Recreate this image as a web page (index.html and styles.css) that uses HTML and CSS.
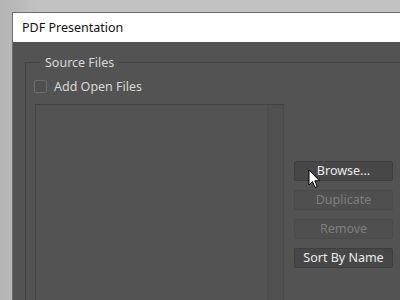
FILE: index.html
```html
<!DOCTYPE html>
<html lang="en">
<head>
    <meta charset="UTF-8">
    <title>PDF Presentation</title>
    <link rel="stylesheet" href="styles.css">
</head>
<body>
    <div class="dialog">
        <div class="title-bar">PDF Presentation</div>
        <div class="dialog-body">
            <fieldset class="group">
                <legend>Source Files</legend>
                <label class="check-row">
                    <span class="checkbox"></span>
                    Add Open Files
                </label>
                <div class="files-row">
                    <div class="file-list">
                        <div class="list-area"></div>
                        <div class="scrollbar"></div>
                    </div>
                    <div class="buttons">
                        <button class="btn">Browse...</button>
                        <button class="btn" disabled>Duplicate</button>
                        <button class="btn" disabled>Remove</button>
                        <button class="btn">Sort By Name</button>
                    </div>
                </div>
            </fieldset>
        </div>
    </div>

    <svg class="cursor" width="13" height="20" viewBox="0 0 13 20">
        <path d="M1 1 L1 16 L4.5 12.5 L7 18.5 L9.2 17.6 L6.8 11.8 L11.5 11.8 Z" fill="#fff" stroke="#000" stroke-width="1" stroke-linejoin="round"/>
    </svg>
</body>
</html>
```

FILE: styles.css
```css
html, body {
    margin: 0;
    height: 100%;
    overflow: hidden;
}

body {
    position: relative;
    background: linear-gradient(to right, #b4b4b4, #c2c2c2 40px, #c2c2c2);
    padding: 12px 0 0 12px;
    box-sizing: border-box;
    font-family: "Noto Sans", Arial, sans-serif;
    font-size: 12px;
}

.dialog {
    height: 100%;
    box-sizing: border-box;
    border: 1px solid #6b6b6b;
    border-right: none;
    border-bottom: none;
    background-color: #535353;
    display: flex;
    flex-direction: column;
}

.title-bar {
    height: 29px;
    line-height: 29px;
    background-color: #fff;
    color: #111;
    padding-left: 9px;
    font-size: 12.5px;
}

.dialog-body {
    flex: 1;
    padding: 12px 0 0 12px;
    min-height: 0;
}

.group {
    margin: 0;
    padding: 5px 0 0 8px;
    border: 1px solid #434343;
    border-right: none;
    border-bottom: none;
    min-width: 0;
    height: 100%;
    box-sizing: border-box;
}

.group legend {
    margin-left: 6px;
    padding: 0 5px;
    color: #d8d8d8;
    font-size: 12.5px;
}

.check-row {
    display: flex;
    align-items: center;
    gap: 7px;
    color: #d8d8d8;
    font-size: 12.5px;
    height: 20px;
}

.checkbox {
    width: 11px;
    height: 11px;
    border: 1px solid #6c6c6c;
    border-radius: 2px;
    background-color: #4f4f4f;
}

.files-row {
    display: flex;
    gap: 10px;
    margin-top: 8px;
    margin-left: 1px;
}

.file-list {
    display: flex;
    width: 247px;
    height: 200px;
    border-top: 1px solid #434343;
    border-left: 1px solid #434343;
    border-right: 1px solid #4a4a4a;
}

.list-area {
    flex: 1;
}

.scrollbar {
    width: 15px;
    background-color: #505050;
    border-left: 1px solid #4d4d4d;
}

.buttons {
    display: flex;
    flex-direction: column;
    gap: 9px;
    margin-top: 57px;
}

.btn {
    width: 99px;
    height: 20px;
    padding: 0;
    border: 1px solid #3e3e3e;
    border-radius: 2px;
    background-color: #474747;
    color: #ececec;
    font-family: "Noto Sans", Arial, sans-serif;
    font-size: 12.5px;
    line-height: 18px;
}

.btn:disabled {
    background-color: #4f4f4f;
    border-color: #4a4a4a;
    color: #7e7e7e;
}

.cursor {
    position: absolute;
    left: 308px;
    top: 169px;
}
```
